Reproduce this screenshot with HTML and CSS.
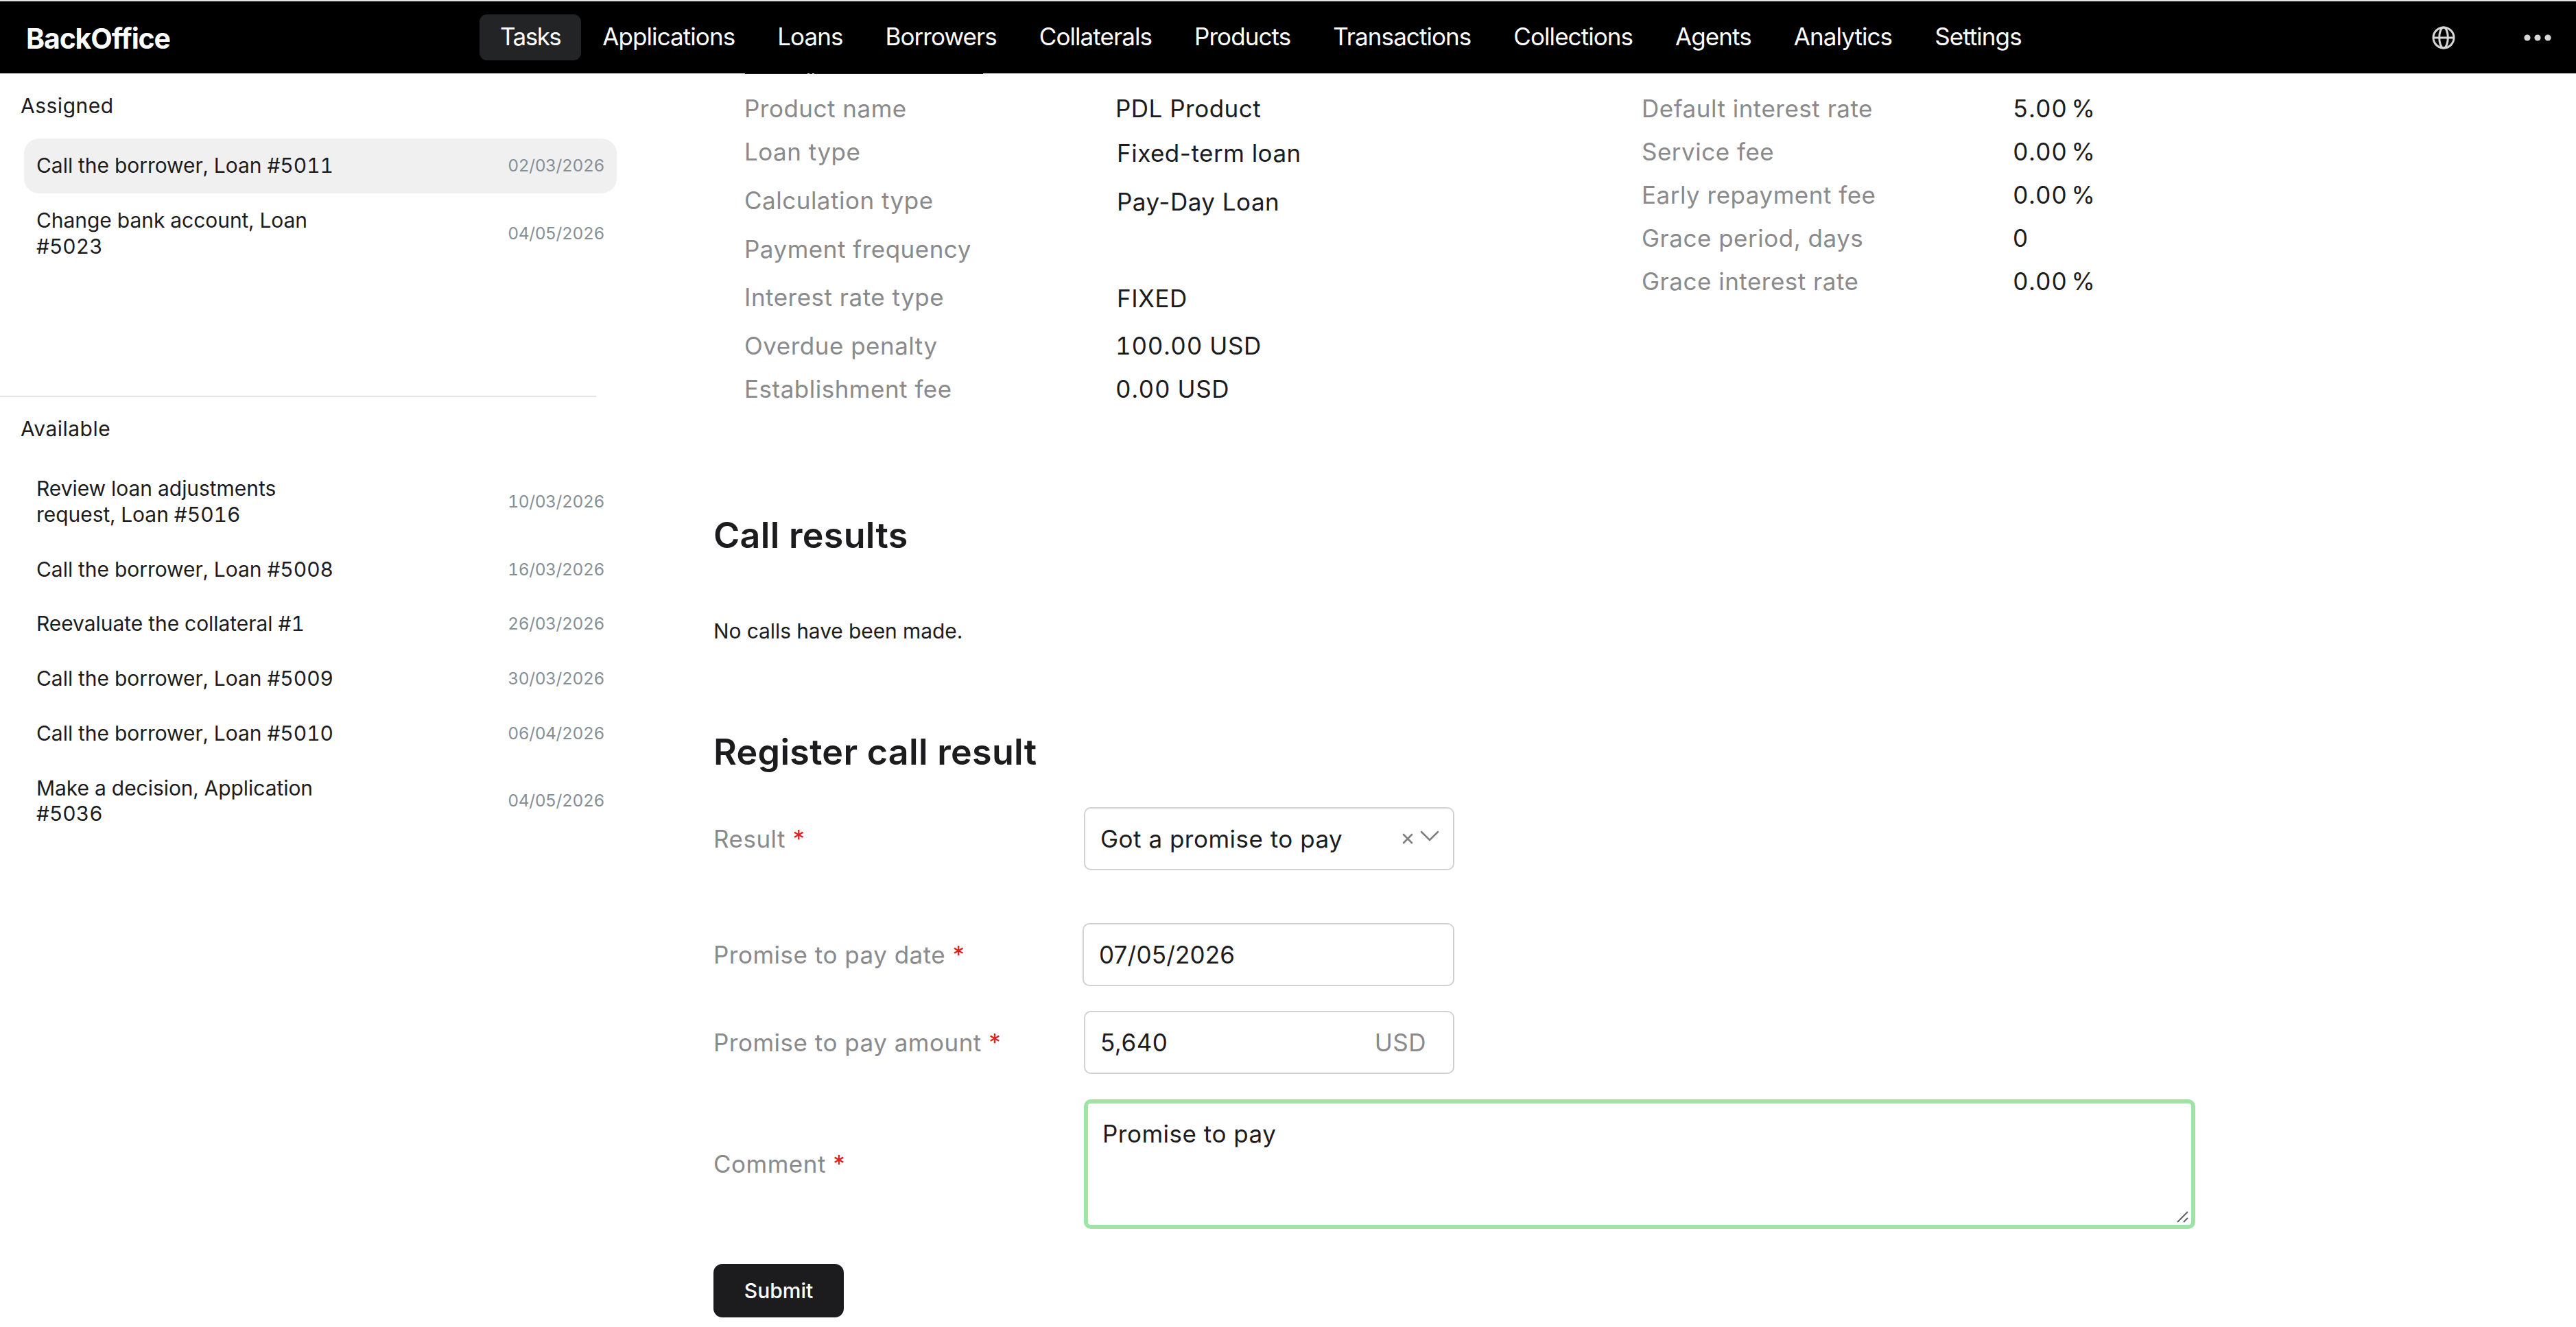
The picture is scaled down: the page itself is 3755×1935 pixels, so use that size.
FILE: index.html
```html
<!DOCTYPE html>
<html lang="en">
<head>
    <meta charset="UTF-8">
    <meta name="viewport" content="width=device-width, initial-scale=1.0">
    <title>BackOffice</title>
    <link rel="stylesheet" href="styles.css">
</head>
<body>
    <header class="header">
        <div class="logo">BackOffice</div>
        <nav class="nav">
            <a class="nav-item active">Tasks</a>
            <a class="nav-item">Applications</a>
            <a class="nav-item">Loans</a>
            <a class="nav-item">Borrowers</a>
            <a class="nav-item">Collaterals</a>
            <a class="nav-item">Products</a>
            <a class="nav-item">Transactions</a>
            <a class="nav-item">Collections</a>
            <a class="nav-item">Agents</a>
            <a class="nav-item">Analytics</a>
            <a class="nav-item">Settings</a>
        </nav>
        <div class="header-icons">
            <svg class="globe" viewBox="0 0 34 34">
                <circle cx="17" cy="17" r="15"/>
                <ellipse cx="17" cy="17" rx="6.3" ry="15"/>
                <path d="M2 17h30"/>
            </svg>
            <svg class="dots" viewBox="0 0 40 10">
                <circle cx="5" cy="5" r="4.6"/>
                <circle cx="20" cy="5" r="4.6"/>
                <circle cx="35" cy="5" r="4.6"/>
            </svg>
        </div>
    </header>

    <div class="page">
        <aside class="sidebar">
            <section class="assigned">
                <h3>Assigned</h3>
                <div class="task selected"><span class="task-name">Call the borrower, Loan #5011</span><span class="task-date">02/03/2026</span></div>
                <div class="task"><span class="task-name">Change bank account, Loan #5023</span><span class="task-date">04/05/2026</span></div>
            </section>
            <section class="available">
                <h3>Available</h3>
                <div class="task"><span class="task-name">Review loan adjustments request, Loan #5016</span><span class="task-date">10/03/2026</span></div>
                <div class="task"><span class="task-name">Call the borrower, Loan #5008</span><span class="task-date">16/03/2026</span></div>
                <div class="task"><span class="task-name">Reevaluate the collateral #1</span><span class="task-date">26/03/2026</span></div>
                <div class="task"><span class="task-name">Call the borrower, Loan #5009</span><span class="task-date">30/03/2026</span></div>
                <div class="task"><span class="task-name">Call the borrower, Loan #5010</span><span class="task-date">06/04/2026</span></div>
                <div class="task"><span class="task-name">Make a decision, Application #5036</span><span class="task-date">04/05/2026</span></div>
            </section>
        </aside>

        <main class="content">
            <!-- underline of the link scrolled under the header -->
            <div class="link-line"><i class="line-start"></i><i class="line-tail"></i><i class="line-end"></i></div>

            <div class="details">
                <div class="details-col">
                    <div class="row"><span class="label">Product name</span><span class="value">PDL Product</span></div>
                    <div class="row tall"><span class="label">Loan type</span><span class="value">Fixed-term loan</span></div>
                    <div class="row tall"><span class="label">Calculation type</span><span class="value">Pay-Day Loan</span></div>
                    <div class="row tall"><span class="label">Payment frequency</span><span class="value"></span></div>
                    <div class="row tall"><span class="label">Interest rate type</span><span class="value">FIXED</span></div>
                    <div class="row"><span class="label">Overdue penalty</span><span class="value money">100.00 USD</span></div>
                    <div class="row"><span class="label">Establishment fee</span><span class="value money">0.00 USD</span></div>
                </div>
                <div class="details-col">
                    <div class="row"><span class="label">Default interest rate</span><span class="value percent">5.00 %</span></div>
                    <div class="row"><span class="label">Service fee</span><span class="value percent">0.00 %</span></div>
                    <div class="row"><span class="label">Early repayment fee</span><span class="value percent">0.00 %</span></div>
                    <div class="row"><span class="label">Grace period, days</span><span class="value">0</span></div>
                    <div class="row"><span class="label">Grace interest rate</span><span class="value percent">0.00 %</span></div>
                </div>
            </div>

            <h2 class="calls-title">Call results</h2>
            <p class="no-calls">No calls have been made.</p>

            <h2 class="register-title">Register call result</h2>
            <form class="form">
                <div class="form-row result-row">
                    <label>Result <b>*</b></label>
                    <div class="field">
                        <span>Got a promise to pay</span>
                        <svg class="select-icons" viewBox="0 0 54 22">
                            <path d="M3 6l12 12M15 6L3 18"/>
                            <path d="M29 2l12 12 12-12"/>
                        </svg>
                    </div>
                </div>
                <div class="form-row">
                    <label>Promise to pay date <b>*</b></label>
                    <div class="field date"><span>07/05/2026</span></div>
                </div>
                <div class="form-row">
                    <label>Promise to pay amount <b>*</b></label>
                    <div class="field"><span>5,640</span><span class="currency">USD</span></div>
                </div>
                <div class="form-row">
                    <label>Comment <b>*</b></label>
                    <div class="comment">
                        Promise to pay
                        <svg class="grip" viewBox="0 0 20 20">
                            <path d="M2 18L17 3M11 18l6-6"/>
                        </svg>
                    </div>
                </div>
                <button type="button" class="submit">Submit</button>
            </form>
        </main>
    </div>
</body>
</html>
```
FILE: styles.css
```css
* {
    box-sizing: border-box;
}

body {
    margin: 0;
    height: 1935px;
    overflow: hidden;
    background-color: #fff;
    color: #1c1c1e;
    font-family: Inter, "Liberation Sans", sans-serif;
    font-size: 35px;
}

h2, h3, p {
    margin: 0;
}

.header {
    display: flex;
    align-items: center;
    height: 107px;
    border-top: 2px solid #e2e3e4;
    background-color: #000;
    color: #fff;
}

.logo {
    width: 699px;
    padding: 2px 0 0 38px;
    font-size: 41px;
    font-weight: 700;
    letter-spacing: -1.15px;
}

.nav {
    display: flex;
}

.nav-item {
    height: 67px;
    padding: 0 31px;
    border-radius: 11px;
    line-height: 65px;
    letter-spacing: -0.93px;
}

.nav-item.active {
    padding: 0 30px;
    background-color: #232426;
    letter-spacing: -1.5px;
}

.header-icons {
    display: flex;
    align-items: center;
    gap: 100px;
    margin-left: auto;
    padding-right: 36px;
}

.globe {
    width: 34px;
    height: 34px;
    fill: none;
    stroke: #d6d6d6;
    stroke-width: 3;
}

.dots {
    width: 40px;
    height: 10px;
    fill: #d6d6d6;
}

.page {
    display: flex;
}

.sidebar {
    width: 900px;
    font-size: 30px;
    font-variant-numeric: tabular-nums;
}

.sidebar h3 {
    padding-left: 30px;
    font-size: 30px;
    font-weight: 400;
    line-height: 40px;
    letter-spacing: 0.5px;
}

.assigned {
    height: 470px;
    padding-top: 27px;
}

.assigned h3 {
    margin-bottom: 28px;
}

.available::before {
    content: "";
    display: block;
    width: 869px;
    height: 2px;
    margin-bottom: 26px;
    background-color: #e3e3e3;
}

.available h3 {
    margin-bottom: 28px;
}

.task {
    display: flex;
    align-items: center;
    justify-content: space-between;
    width: 864px;
    margin-left: 35px;
    padding: 21px 18px;
    border-radius: 22px;
    line-height: 37.75px;
    letter-spacing: -0.05px;
}

.task.selected {
    background-color: #f0f0f0;
}

.task-name {
    width: 460px;
}

.task-date {
    color: #868e96;
    font-size: 24.5px;
    letter-spacing: -0.4px;
}

.content {
    width: 2855px;
    padding-left: 140px;
}

.link-line {
    display: flex;
    height: 1px;
    padding-left: 46px;
}

.link-line i {
    height: 1px;
    background-color: #1c1c1e;
}

.line-start {
    width: 91px;
}

.line-tail {
    width: 4px;
    margin: 0 3px;
}

.line-end {
    width: 246px;
}

.details {
    display: flex;
    height: 472px;
    margin-top: 19px;
    margin-left: 45px;
    letter-spacing: 0.5px;
}

.details-col {
    width: 1308px;
}

.row {
    display: flex;
    height: 63px;
    line-height: 63px;
}

.row.tall {
    height: 70.75px;
}

.row.tall .value {
    padding: 2px 0 0 2px;
}

.label {
    width: 541px;
    color: #8a8a8c;
}

.money, .percent {
    font-variant-numeric: tabular-nums;
}

.money {
    letter-spacing: 0.7px;
}

.percent {
    word-spacing: -4px;
}

h2 {
    font-size: 52px;
    font-weight: 600;
    line-height: 60px;
    letter-spacing: 0.3px;
}

.calls-title {
    margin-top: 152px;
}

.no-calls {
    margin-top: 89px;
    font-size: 30px;
    line-height: 40px;
    letter-spacing: -0.1px;
}

.register-title {
    margin-top: 127px;
}

.form {
    display: flex;
    flex-direction: column;
    gap: 36.5px;
    margin-top: 50px;
    letter-spacing: 0.5px;
}

.form-row {
    display: flex;
    align-items: center;
}

.form-row label {
    width: 540px;
    color: #8a8a8c;
}

.form-row b {
    color: #e02020;
    font-weight: 400;
}

.result-row {
    margin-bottom: 40px;
}

.field {
    display: flex;
    align-items: center;
    justify-content: space-between;
    width: 540px;
    height: 92px;
    padding: 0 21px 0 22px;
    border: 2px solid #d2d2d2;
    border-radius: 10px;
}

.field.date {
    width: 542px;
    margin-left: -2px;
    letter-spacing: 0.2px;
}

.currency {
    margin-right: 18px;
    color: #8a8a8c;
}

.select-icons {
    width: 54px;
    height: 22px;
    margin-top: -2px;
    fill: none;
    stroke: #808080;
    stroke-width: 2.6;
    stroke-linecap: round;
}

.comment {
    position: relative;
    width: 1620px;
    height: 189px;
    padding: 24px 21px;
    border: 6px solid #9ee4a4;
    border-radius: 10px;
    line-height: 40px;
}

.grip {
    position: absolute;
    right: 2px;
    bottom: 2px;
    width: 20px;
    height: 20px;
    fill: none;
    stroke: #606060;
    stroke-width: 2;
}

.submit {
    width: 190px;
    height: 78px;
    margin-top: 14.5px;
    border: none;
    border-radius: 13px;
    background-color: #1c1c1e;
    color: #fff;
    font-family: inherit;
    font-size: 30px;
    font-weight: 500;
}
```
